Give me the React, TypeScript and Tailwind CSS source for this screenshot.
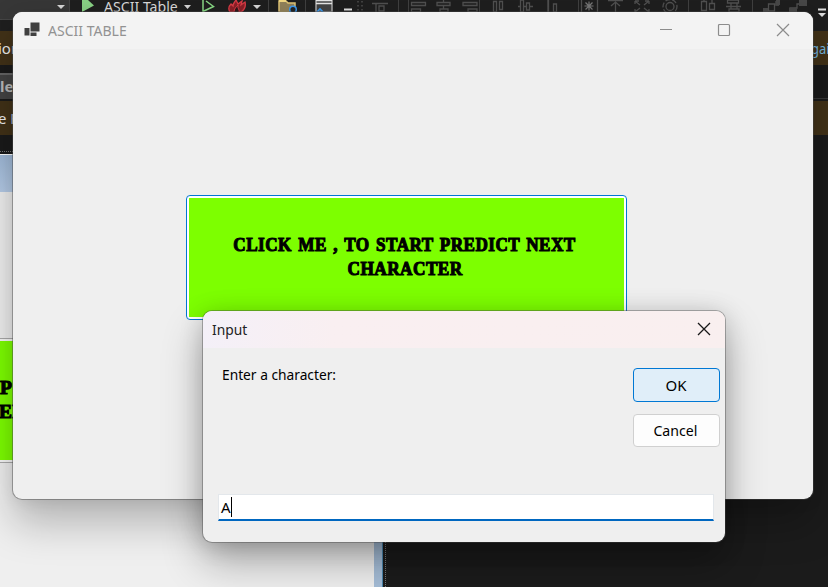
import React from "react";

const ui = "font-['Noto_Sans','Open_Sans',sans-serif]";

function ToolbarIcons() {
  return (
    <svg width="828" height="31" viewBox="0 0 828 31" fill="none" className="block shrink-0">
      <rect width="828" height="31" fill="#1f1f1f" />
      <rect width="69" height="19" fill="#373737" />
      <path d="M0 19.500H69.500V0" stroke="#464646" />
      <path d="M57 5h8l-4 4z" fill="#d6d6d6" />
      <path d="M82 0v12l12-6.500L88 0z" fill="#89d185" />
      <path d="M184 5h7l-3.500 4zM253 5h8l-4 4z" fill="#d6d6d6" />
      <path d="M203 0v11.500l10.500-5L206 1" stroke="#89d985" strokeWidth="1.500" />
      <path d="M230 12c-2-3-1-6 1-8l2 2c0-3 2-4 3-6l2 4 4-3-1 4 4-3c1 4-1 8-4 10z" fill="#8b2027" stroke="#d83b45" strokeWidth="1.300" />
      <path d="M234 12c0-3 2-5 4-7-1 4 2 4 1 7" fill="#32191b" stroke="#d83b45" />
      <path d="M268.500 0v12M305.500 0v12M398.500 0v12M408.500 0v12M479.500 0v12M547.500 0v12M578.500 0v12M688.500 0v12M752.500 0v12" stroke="#404040" />
      <path d="M279 1h7l2 2h7v9h-16z" fill="#91815a" stroke="#dfc475" strokeWidth="1.500" />
      <path d="M279 1h7" stroke="#f0d681" strokeWidth="2" />
      <circle cx="293" cy="9.500" r="3.300" fill="#252525" stroke="#3d9aef" strokeWidth="1.500" />
      <path d="M316 0v12h16V0" fill="#444" stroke="#aaa" strokeWidth="1.500" />
      <path d="M316 0.500h16M316 3.500h16" stroke="#e5e5e5" strokeWidth="1.300" />
      <path d="M317 12l3-3 3 3" stroke="#3d9aef" strokeWidth="1.700" />
      <path d="M344 9.500h8" stroke="#e0e0e0" strokeWidth="2" />
      <path d="M358 1v11M362 1v11" stroke="#666" strokeDasharray="1.500 2.500" />
      <g stroke="#505050" strokeWidth="1.300">
        <path d="M372 3.500h16M376 3v9M379 6h5v5h-5zM411.500 2.500h14v3h-14zM411.500 9h9v3h-9zM437 2.500h13v3h-13zM443.500 0v2M443.500 5v4M440 9h8v3h-8zM463 2.500h14v3h-14zM468 9h9v3h-9z" />
        <path d="M493.500 1.500h3V12h-3zM499.500 1.500h3v8h-3zM520.500 0h3v12h-3zM526.500 3h3v7h-3zM518 6.500h2M524 6.500h2M530 6.500h3M548.500 0v12M553.500 4h3v8h-3z" />
        <path d="M581.500 0v12M597.500 0v12M608 0.500h15M615.500 2v10M611 6l4.500-4 4.500 4M635 1l5 4M635 1v3M635 1h4M649 1l-5 4M649 1v3M649 1h-4M635 12l5-4M649 12l-5-4M635 9v3M649 9v3M701.500 1.500h5v9h-5zM709.500 3.500h5v6h-5zM704 0v1M712 0v3M727.500 0h11v3h-11zM729 9h10v3h-10zM726 6.500h15M731 3v6M737 3v6" />
        <circle cx="670" cy="6.500" r="7" strokeDasharray="5 2" />
        <circle cx="670" cy="6.500" r="4" />
        <path d="M768.500 4h6v7h-6zM776 1v4h3M764 9v3h4M790 12V8h7V4h4" />
      </g>
      <path d="M589 1.500v9M584.500 6h9M585.500 2.500l7 7M592.500 2.500l-7 7" stroke="#777" strokeWidth="1.200" />
      <path d="M776 0h4v5h-4zM799 0h8v6h-8zM763 8h5v4h-5zM789 8h8v4h-8z" fill="#484848" />
      <path d="M818 9.500h8" stroke="#ddd" strokeWidth="2" />
      <path d="M818 13h8l-4 4z" fill="#ddd" />
    </svg>
  );
}

const stencil =
  "font-['Liberation_Serif',serif] text-[19.500px] font-bold leading-[24px] text-black [-webkit-text-stroke:1.100px_black]";

function StencilLabel() {
  return (
    <div className={`flex flex-col items-center whitespace-nowrap ${stencil}`}>
      <span className="flex w-[342px] justify-center">
        <span className="origin-center scale-x-[0.880] tracking-[0.500px] [word-spacing:2px]">CLICK ME , TO START PREDICT NEXT</span>
      </span>
      <span className="inline-block origin-center scale-x-[0.885] tracking-[0.500px]">CHARACTER</span>
    </div>
  );
}

function IdeBackground() {
  return (
    <div className={`flex h-full flex-col bg-[#1b1b1b] text-[15px] ${ui}`}>
      <div className="relative h-[31px] shrink-0">
        <ToolbarIcons />
        <span className="absolute left-[104px] -top-[4px] origin-left scale-x-[0.940] whitespace-nowrap leading-[21px] text-[#d8d8d8]">ASCII Table</span>
      </div>
      <div className="flex h-[34px] shrink-0 items-center justify-between bg-[#423218]">
        <span className="-ml-[2px] w-[16px] whitespace-nowrap text-[#eee]">ion</span>
        <span className="w-[17px] origin-left scale-x-[0.860] whitespace-nowrap text-[#72b3df]">gain</span>
      </div>
      <div className="h-[8px] shrink-0" />
      <div className="flex h-[26px] shrink-0 justify-between font-bold text-[#bbb]">
        <span className="w-[13px] whitespace-nowrap border-t-2 border-[#666] bg-[#444]">le</span>
        <span className="w-[15px] border-b border-[#383838]" />
      </div>
      <div className="h-[2px] shrink-0" />
      <div className="flex h-[34px] shrink-0 items-center bg-[#423218] text-[#eee]">
        <span className="-ml-[2px] w-[15px] whitespace-nowrap">e F</span>
      </div>
      <div className="h-[19px] shrink-0 pt-[16px]"><div className="w-[13px] border-t border-dotted border-[#777]" /></div>
      <div className="flex grow">
        <div className="flex w-[374px] flex-col bg-[#efefef]">
          <div className="h-[38px] shrink-0 border-t border-white bg-gradient-to-b from-[#9fb9d7] to-[#b5cbe7]" />
          <div className="h-[146px] shrink-0" />
          <div className="flex h-[125px] shrink-0 flex-col border-y border-[#aaa] bg-[#f7f7f7] py-[2px]">
            <div className={`flex grow flex-col justify-center bg-[#7dff00] pb-[2px] ${stencil}`}>
              <span>P</span><span className="-ml-px">EF</span>
            </div>
          </div>
        </div>
        <div className="w-[9px] border-r border-[#4b86ad] bg-[#a5bdd7]" />
        <div className="ml-[2px] border-l border-dotted border-[#777]" />
      </div>
    </div>
  );
}

function AsciiWindow() {
  return (
    <section className="absolute left-[13px] top-[12px] flex h-[487px] w-[800px] flex-col overflow-hidden rounded-[9px] bg-[#efefef] shadow-[0_0_0_1px_rgba(70,70,70,0.450),0_24px_40px_rgba(0,0,0,0.250),0_2px_16px_rgba(0,0,0,0.080)]">
      <header className={`flex h-[37px] shrink-0 items-center bg-[#f3f3f3] pl-[11px] text-[15px] text-[#929292] ${ui}`}>
        <svg width="17" height="16" viewBox="0 0 17 16" className="mb-px">
          <rect x="6.500" y="0.500" width="9" height="9" fill="#404040" />
          <rect x="0.500" y="6" width="5" height="7.500" fill="#404040" />
          <rect x="6.500" y="10.500" width="6" height="3.500" fill="#404040" />
        </svg>
        <span className="ml-[7px] w-[90px] origin-left scale-x-[0.935] whitespace-nowrap">ASCII TABLE</span>
        <svg width="132" height="14" viewBox="0 0 132 14" className="mb-[2px] ml-auto mr-[23px]" fill="none" stroke="#8c8c8c" strokeWidth="1.200">
          <path d="M2 6.500h12M119 1l12 12M131 1l-12 12" />
          <rect x="60.500" y="1.500" width="11" height="11" rx="1" />
        </svg>
      </header>
      <main className="flex grow justify-center pr-[13px] pt-[146px]">
        <button className="flex h-[125px] w-[441px] rounded-[4px] border border-[#0078d4] bg-white p-[2px]">
          <span className="flex h-full w-full justify-center bg-[#7dff00] pr-[3px] pt-[35px]">
            <StencilLabel />
          </span>
        </button>
      </main>
    </section>
  );
}

function InputDialog() {
  return (
    <section className={`absolute left-[203px] top-[311px] flex h-[231px] w-[522px] flex-col overflow-hidden rounded-[9px] bg-[#efefef] text-[15px] text-black shadow-[0_0_0_1px_rgba(70,70,70,0.400),0_20px_40px_rgba(0,0,0,0.300),0_2px_24px_rgba(0,0,0,0.160)] ${ui}`}>
      <header className="flex h-[37px] shrink-0 items-center justify-between bg-gradient-to-r from-[#f4f0f8] via-[#f9eff1] via-25% to-[#f9efef] pb-px pl-[9px] pr-[14px] text-[#222]">
        <span className="origin-left scale-x-[0.920]">Input</span>
        <svg width="14" height="14" viewBox="0 0 14 14" stroke="#181818" strokeWidth="1.300"><path d="M1 1l12 12M13 1L1 13" /></svg>
      </header>
      <div className="flex h-[146px] shrink-0 justify-between pl-[19px] pr-[5px]">
        <span className="origin-left scale-x-[0.917] pt-[15px] leading-[22px]">Enter a character:</span>
        <div className="flex w-[87px] flex-col gap-[12px] pt-[20px]">
          <button className="h-[34px] shrink-0 rounded-[4px] border border-[#0078d4] bg-[#e0eef9]"><span className="-ml-px inline-block">OK</span></button>
          <button className="h-[33px] shrink-0 rounded-[4px] border border-[#d0d0d0] bg-[#fdfdfd]"><span className="-ml-[2px] inline-block scale-x-[0.940]">Cancel</span></button>
        </div>
      </div>
      <div className="ml-[15px] flex h-[27px] w-[496px] items-center border border-b-2 border-[#e3e7eb] border-b-[#0067c0] bg-white pl-[2px]">
        <span className="leading-none">A</span><i className="h-[20px] w-px bg-black" />
      </div>
    </section>
  );
}

export default function App() {
  return (
    <div className="relative h-[587px] w-[828px] overflow-hidden">
      <IdeBackground />
      <AsciiWindow />
      <InputDialog />
    </div>
  );
}
